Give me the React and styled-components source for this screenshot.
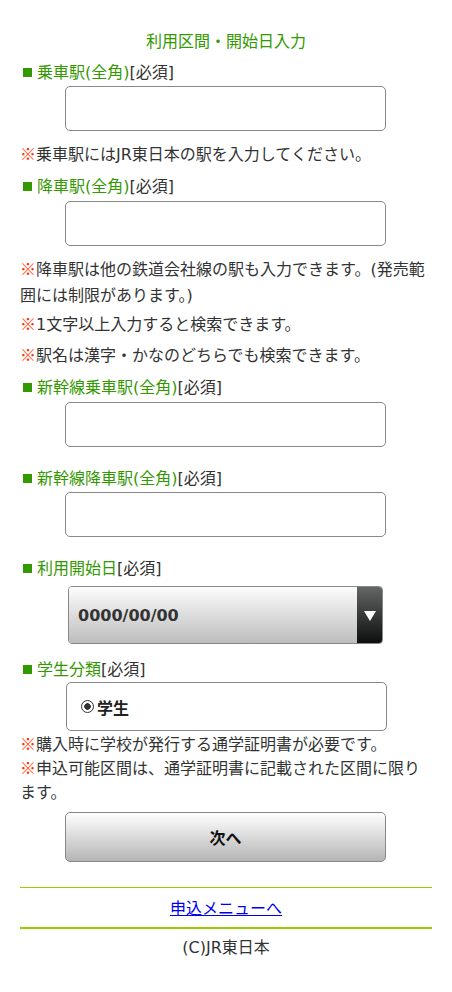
import React from "react";
import styled, { createGlobalStyle } from "styled-components";

const GlobalStyle = createGlobalStyle`
  html, body {
    margin: 0;
    padding: 0;
    background: #fff;
  }
  body {
    font-family: "DejaVu Sans", "Noto Sans CJK JP", sans-serif;
    font-size: 16px;
    color: #333;
  }
`;

const Page = styled.div`
  padding: 0 20px 40px;
`;

const Title = styled.h1`
  margin: 30px 0 0;
  font-size: 16px;
  font-weight: normal;
  line-height: 24px;
  text-align: center;
  color: #339900;
`;

const Label = styled.div`
  margin-top: ${({ $mt }) => $mt}px;
  height: 24px;
  line-height: 24px;
  color: #333;
`;

const Square = styled.span`
  display: inline-block;
  width: 9px;
  height: 9px;
  margin: 0 5px 0 3px;
  background: #339900;
  vertical-align: 1px;
`;

const LabelName = styled.span`
  color: #339900;
`;

const TextBox = styled.input`
  display: block;
  box-sizing: border-box;
  width: 321px;
  height: 45px;
  margin: ${({ $mt }) => $mt}px 0 0 45px;
  border: 1px solid #888;
  border-radius: 5px;
  background: #fff;
  outline: none;
  font-size: 16px;
  padding: 0 10px;
`;

const Note = styled.p`
  margin: ${({ $mt }) => $mt}px 0 0;
  line-height: ${({ $lh }) => $lh || 24}px;
  color: #333;
`;

const Mark = styled.span`
  font-family: "Noto Sans CJK JP", sans-serif;
  line-height: 1;
  color: #ff3300;
`;

const SelectBox = styled.div`
  display: flex;
  box-sizing: border-box;
  width: 315px;
  height: 58px;
  margin: 5px 0 0 48px;
  border: 1px solid #888;
  border-radius: 4px;
  overflow: hidden;
`;

const SelectValue = styled.div`
  flex: 1;
  display: flex;
  align-items: center;
  padding-left: 9px;
  background: linear-gradient(#fcfcfc, #bdbdbd);
  font-family: "DejaVu Sans", sans-serif;
  font-weight: bold;
  font-size: 16px;
  color: #333;
`;

const SelectArrow = styled.div`
  width: 25px;
  display: flex;
  align-items: center;
  justify-content: center;
  background: linear-gradient(#626664, #0e0e0e);

  &::after {
    content: "";
    width: 0;
    height: 0;
    border-left: 6px solid transparent;
    border-right: 6px solid transparent;
    border-top: 10px solid #fff;
    margin-top: 1px;
  }
`;

const RadioBox = styled.label`
  display: flex;
  align-items: center;
  box-sizing: border-box;
  width: 321px;
  height: 49px;
  margin: 0 0 0 46px;
  padding-left: 14px;
  border: 1px solid #888;
  border-radius: 5px;
  font-family: "Noto Sans CJK JP", sans-serif;
  font-weight: bold;
  color: #222;
`;

const Radio = styled.input`
  appearance: none;
  box-sizing: border-box;
  width: 13px;
  height: 13px;
  margin: 0 3px 0 0;
  border: 1.5px solid #333;
  border-radius: 50%;
  background: radial-gradient(circle, #333 0 3px, #fff 3.5px);
`;

const NextButton = styled.button`
  display: block;
  box-sizing: border-box;
  width: 321px;
  height: 50px;
  margin: 7px 0 0 45px;
  border: 1px solid #888;
  border-radius: 5px;
  background: linear-gradient(#ffffff, #b5b5b5);
  font-family: "Noto Sans CJK JP", sans-serif;
  font-weight: bold;
  font-size: 16px;
  color: #111;
  cursor: pointer;
`;

const Rule = styled.hr`
  margin: ${({ $mt }) => $mt}px 0 0;
  border: none;
  height: ${({ $h }) => $h}px;
  background: #99cc00;
`;

const MenuLink = styled.a`
  display: block;
  margin-top: 7px;
  line-height: 24px;
  text-align: center;
  font-family: "Noto Sans CJK JP", sans-serif;
  color: #0000ee;
  text-decoration: underline;
`;

const Copyright = styled.div`
  margin-top: 7px;
  line-height: 24px;
  text-align: center;
  color: #333;
`;

const FieldLabel = ({ name, mt }) => (
  <Label $mt={mt}>
    <Square />
    <LabelName>{name}</LabelName>[必須]
  </Label>
);

const Notice = ({ children, mt, lh }) => (
  <Note $mt={mt} $lh={lh}>
    <Mark>※</Mark>
    {children}
  </Note>
);

export default function App() {
  return (
    <>
      <GlobalStyle />
      <Page>
        <Title>利用区間・開始日入力</Title>

        <FieldLabel name="乗車駅(全角)" mt={7} />
        <TextBox $mt={1} />
        <Notice mt={12}>乗車駅にはJR東日本の駅を入力してください。</Notice>

        <FieldLabel name="降車駅(全角)" mt={8} />
        <TextBox $mt={2} />
        <Notice mt={11} lh={26}>
          降車駅は他の鉄道会社線の駅も入力できます。(発売範囲には制限があります。)
        </Notice>
        <Notice mt={3} lh={26}>1文字以上入力すると検索できます。</Notice>
        <Notice mt={5} lh={26}>駅名は漢字・かなのどちらでも検索できます。</Notice>

        <FieldLabel name="新幹線乗車駅(全角)" mt={7} />
        <TextBox $mt={2} />

        <FieldLabel name="新幹線降車駅(全角)" mt={20} />
        <TextBox $mt={1} />

        <FieldLabel name="利用開始日" mt={20} />
        <SelectBox>
          <SelectValue>0000/00/00</SelectValue>
          <SelectArrow />
        </SelectBox>

        <FieldLabel name="学生分類" mt={14} />
        <RadioBox>
          <Radio type="radio" name="kind" defaultChecked />
          学生
        </RadioBox>
        <Notice mt={2}>購入時に学校が発行する通学証明書が必要です。</Notice>
        <Notice mt={0}>
          申込可能区間は、通学証明書に記載された区間に限ります。
        </Notice>

        <NextButton type="button">次へ</NextButton>

        <Rule $mt={25} $h={1} />
        <MenuLink href="#menu">申込メニューへ</MenuLink>
        <Rule $mt={8} $h={2} />
        <Copyright>(C)JR東日本</Copyright>
      </Page>
    </>
  );
}
